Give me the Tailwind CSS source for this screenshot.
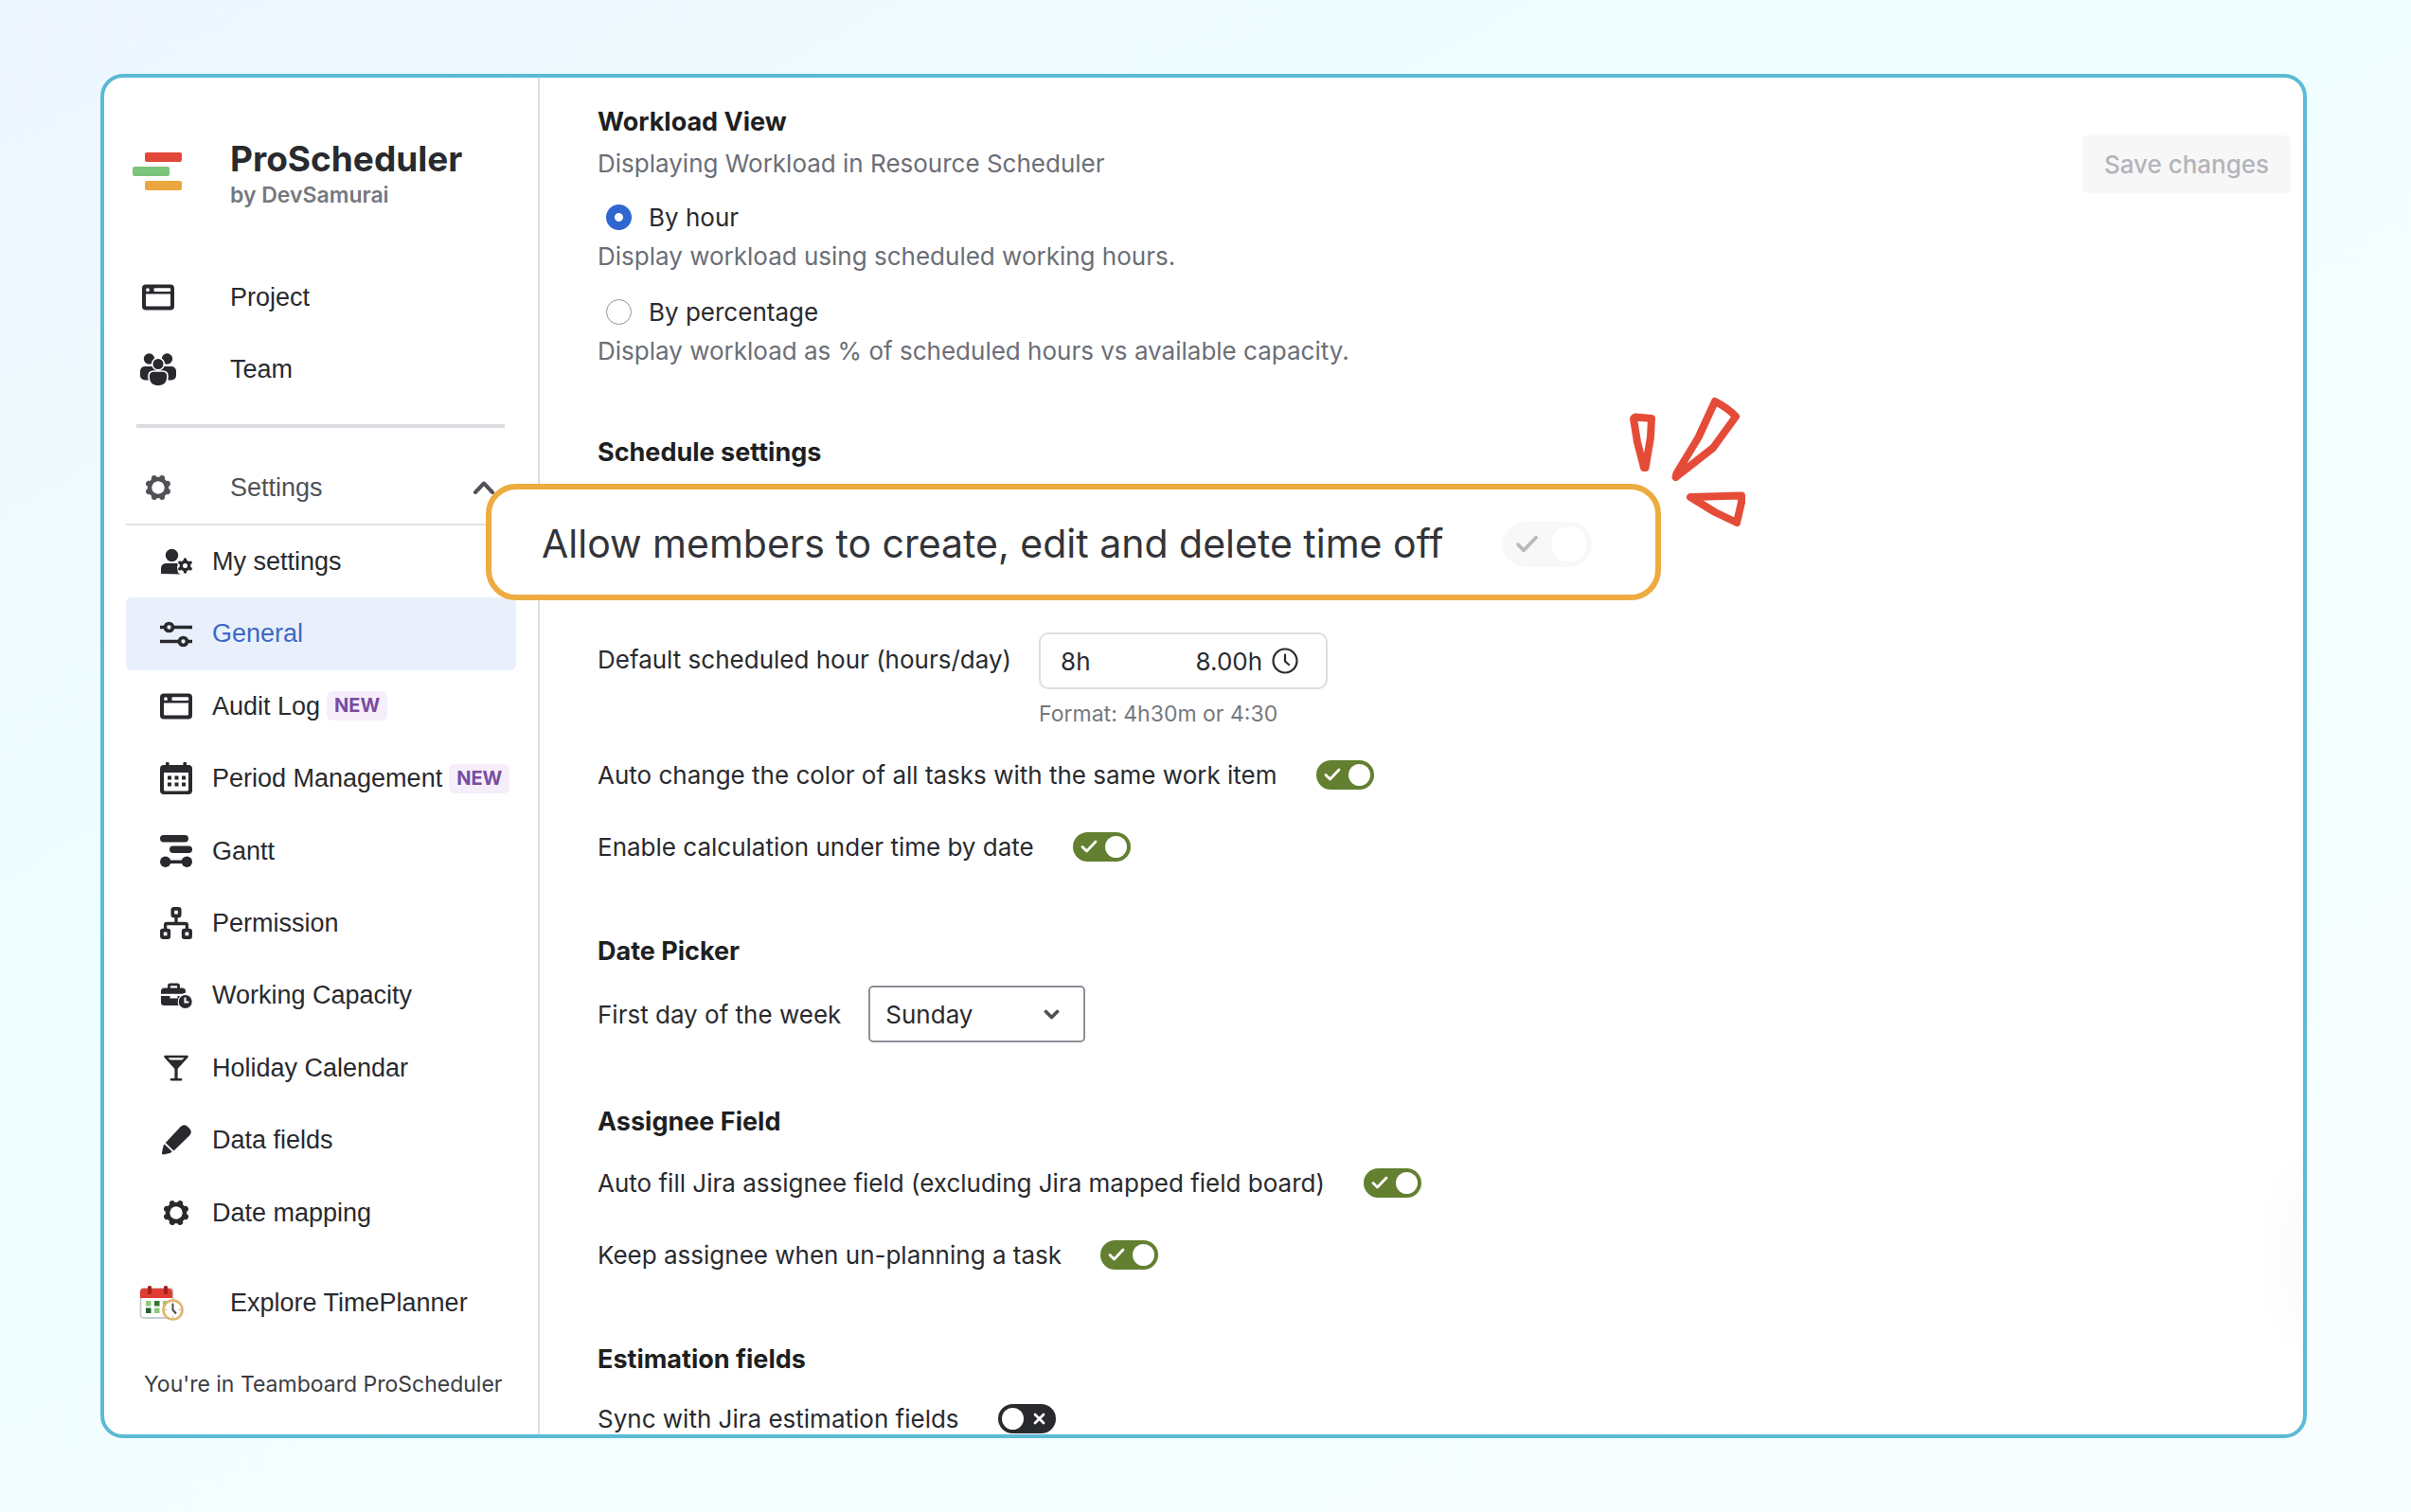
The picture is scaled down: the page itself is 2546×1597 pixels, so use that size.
<!DOCTYPE html>
<html lang="en">
<head>
  <meta charset="utf-8">
  <meta name="viewport" content="width=device-width, initial-scale=1">
  <title>ProScheduler - General settings</title>
  <script src="https://cdn.jsdelivr.net/npm/@tailwindcss/browser@4"></script>
</head>
<body class="h-screen overflow-hidden bg-linear-150 from-[#eef6ff] via-[#effeff] via-35% to-[#f8feff] py-[78px] pl-[106px] pr-[110px] font-['Inter',sans-serif] text-[26px] text-[#292a2e]">

  <!-- icons used more than once -->
  <svg class="hidden">
    <symbol id="window" viewBox="0 0 34 28">
      <path fill="currentColor" fill-rule="evenodd" d="M4 .5h26a4 4 0 0 1 4 4v19a4 4 0 0 1-4 4H4a4 4 0 0 1-4-4v-19a4 4 0 0 1 4-4zM4 10.500v12q0 1 1 1h24q1 0 1-1v-12zM13.500 4.300q-1 0-1 1v1.700q0 1 1 1h15.500q1.200 0 1.200-1V5.300q0-1-1.200-1zM6 4.300a1.900 1.900 0 1 0 0 3.800 1.900 1.900 0 0 0 0-3.800z" />
    </symbol>
    <symbol id="gear" viewBox="0 0 28 28">
      <circle cx="14" cy="14" r="9" fill="none" stroke="currentColor" stroke-width="4.500" />
      <g fill="none" stroke="currentColor" stroke-width="6" stroke-linecap="round" transform="rotate(22.500 14 14)">
        <path d="M14 3.200v1M14 23.800v1M3.200 14h1M23.800 14h1M6.400 6.400l.6.600M21 21l.6.600M21.600 6.400l-.6.600M7 21l-.6.600" />
      </g>
    </symbol>
    <symbol id="check" viewBox="0 0 18 14">
      <path d="M2 7.500l4.500 4.500L16 2" fill="none" stroke="currentColor" stroke-width="2.800" stroke-linecap="round" stroke-linejoin="round" />
    </symbol>
  </svg>

  <div class="relative h-full">
    <div class="relative flex h-full overflow-hidden rounded-[24px] border-4 border-[#5bbad5] bg-white">

      <!-- sidebar -->
      <aside class="w-[460px] shrink-0 border-r-2 border-[#dddee1] pt-[63px] font-['Liberation_Sans',Arial,sans-serif] text-[27px]">
        <div class="flex items-start pl-[30px] font-['Inter',sans-serif] font-semibold">
          <svg class="mt-[15px] h-[42px] w-[52px]" viewBox="0 0 52 42">
            <rect x="13" y="1" width="39" height="10" rx="2" fill="#e2483a" />
            <rect x="0" y="16" width="39" height="10" rx="2" fill="#7bc47b" />
            <rect x="13" y="31" width="39" height="10" rx="2" fill="#eba73f" />
          </svg>
          <div class="ml-[51px]">
            <h1 class="text-[37px] font-bold leading-[46px]">ProScheduler</h1>
            <p class="text-[23px] leading-[30px] text-[#75787d]">by DevSamurai</p>
          </div>
        </div>

        <nav class="mt-[55px] px-[23px]">
          <a href="#" class="flex h-[76px] items-center">
            <span class="flex w-[68px] justify-center"><svg class="h-[28px] w-[34px]"><use href="#window" /></svg></span>
            <span class="ml-[42px]">Project</span>
          </a>
          <a href="#" class="flex h-[76px] items-center">
            <span class="flex w-[68px] justify-center">
              <svg class="h-[36px] w-[40px]" viewBox="0 0 40 36" fill="currentColor">
                <circle cx="10.500" cy="7" r="5.700" />
                <circle cx="29.500" cy="7" r="5.700" />
                <rect x="1" y="15" width="18" height="14.500" rx="5" />
                <rect x="21" y="15" width="18" height="14.500" rx="5" />
                <g stroke="#fff" stroke-width="1.600">
                  <circle cx="20" cy="12.500" r="6.300" />
                  <path d="M10 25.500q0-5.500 5.500-5.500h9q5.500 0 5.500 5.500 0 10.500-10 10.500t-10-10.500z" />
                </g>
              </svg>
            </span>
            <span class="ml-[42px]">Team</span>
          </a>
          <hr class="ml-[11px] mr-[12px] mt-5 border-t-4 border-[#dcdde0]">
          <button type="button" class="mt-[25px] flex h-[78px] w-full items-center border-b-2 border-[#e0e1e4] text-[#505258]">
            <span class="flex w-[68px] justify-center"><svg class="h-[28px] w-[28px]"><use href="#gear" /></svg></span>
            <span class="ml-[42px]">Settings</span>
            <svg class="ml-auto mr-[22px] h-[16px] w-[24px]" viewBox="0 0 24 16" fill="none" stroke="currentColor" stroke-width="4" stroke-linecap="round" stroke-linejoin="round"><path d="M3 13l9-9.500 9 9.500" /></svg>
          </button>

          <ul class="grid h-[764px] auto-rows-fr">
            <li><a href="#" class="flex h-full items-center gap-[21px] pl-9">
              <svg class="h-[28px] w-[34px]" viewBox="0 0 34 28" fill="currentColor">
                <circle cx="12.500" cy="7.500" r="6.700" />
                <path d="M1 27V21.500q0-5.500 6-5.500h11.500q.5 2-.5 4l1 6q1.500.5 3 1.500z" />
                <circle cx="26.500" cy="18.500" r="4.200" fill="none" stroke="currentColor" stroke-width="3.400" />
                <path d="M26.500 12.800v-.8M26.500 24.200v.8M21.600 15.600l-.7-.4M31.400 21.400l.7.400M31.400 15.600l.7-.4M21.600 21.400l-.7.400" stroke="currentColor" stroke-width="3.400" stroke-linecap="round" />
              </svg>
              My settings
            </a></li>
            <li><a href="#" class="flex h-full items-center gap-[21px] rounded-md bg-[#e9f0fc] pl-9">
              <svg class="h-[28px] w-[34px]" viewBox="0 0 34 28" fill="none" stroke="currentColor" stroke-width="3.700">
                <path d="M0 6.500h5M14 6.500h20M0 21.500h20M29 21.500h5" />
                <circle cx="9.500" cy="6.500" r="4" />
                <circle cx="24.500" cy="21.500" r="4" />
              </svg>
              <span class="text-[#3d69c4]">General</span>
            </a></li>
            <li><a href="#" class="flex h-full items-center gap-[21px] pl-9">
              <svg class="h-[28px] w-[34px]"><use href="#window" /></svg>
              <span class="flex items-center gap-[7px]">Audit Log <span class="rounded-md bg-[#f6eefb] px-2 font-['Inter',sans-serif] text-[20px] font-bold leading-[31px] text-[#7a4c9f]">NEW</span></span>
            </a></li>
            <li><a href="#" class="flex h-full items-center gap-[21px] pl-9">
              <svg class="h-[34px] w-[34px]" viewBox="0 0 34 34">
                <path fill="currentColor" fill-rule="evenodd" d="M6 1.500a1.700 1.700 0 0 1 3.600 0V3h14.800V1.500a1.700 1.700 0 0 1 3.600 0V3h2a4 4 0 0 1 4 4v23a4 4 0 0 1-4 4H4a4 4 0 0 1-4-4V7a4 4 0 0 1 4-4h2zM4 11v18q0 1.500 1.500 1.500h23q1.500 0 1.500-1.500V11z" />
                <path d="M8 16.500h19M8 23.500h19" stroke="currentColor" stroke-width="4" stroke-dasharray="4 3.500" />
              </svg>
              <span class="flex items-center gap-[7px] whitespace-nowrap">Period Management <span class="rounded-md bg-[#f6eefb] px-2 font-['Inter',sans-serif] text-[20px] font-bold leading-[31px] text-[#7a4c9f]">NEW</span></span>
            </a></li>
            <li><a href="#" class="flex h-full items-center gap-[21px] pl-9">
              <svg class="h-[34px] w-[34px]" viewBox="0 0 34 34" fill="currentColor">
                <rect width="30" height="7.500" rx="3.700" />
                <rect x="10" y="11.500" width="24" height="7.500" rx="3.700" />
                <circle cx="5.700" cy="28.300" r="5.700" />
                <circle cx="28.300" cy="28.300" r="5.700" />
                <rect x="6" y="26.500" width="22" height="3.600" />
              </svg>
              Gantt
            </a></li>
            <li><a href="#" class="flex h-full items-center gap-[21px] pl-9">
              <svg class="h-[34px] w-[34px]" viewBox="0 0 34 34" fill="none" stroke="currentColor" stroke-width="3.700">
                <rect x="13.300" y="1.900" width="7.400" height="7.400" rx="1" />
                <rect x="1.900" y="24.700" width="7.400" height="7.400" rx="1" />
                <rect x="24.700" y="24.700" width="7.400" height="7.400" rx="1" />
                <path d="M17 9.500v8M5.600 24v-5q0-1.500 1.500-1.500h19.800q1.500 0 1.500 1.500v5" stroke-width="3.300" />
              </svg>
              Permission
            </a></li>
            <li><a href="#" class="flex h-full items-center gap-[21px] pl-9">
              <svg class="h-[28px] w-[34px]" viewBox="0 0 34 28" fill="currentColor">
                <path d="M9.500 6V3q0-1.200 1.200-1.200h7.600q1.200 0 1.200 1.200v3" fill="none" stroke="currentColor" stroke-width="2.800" />
                <path d="M1 12.500V9q0-3.500 3.500-3.500h19Q27 5.500 27 9v1.500l-3.500 1.300H1z" />
                <path d="M1 14h9.500v2.500h8V14H21q-2.500 3-2.300 6.500.1 1.800.8 3.500H4.500Q1 24 1 20.800z" />
                <circle cx="26.700" cy="20" r="7" />
                <path d="M26.500 15.500v5h3.800" fill="none" stroke="#fff" stroke-width="2" />
              </svg>
              Working Capacity
            </a></li>
            <li><a href="#" class="flex h-full items-center gap-[21px] pl-9">
              <svg class="h-[28px] w-[34px]" viewBox="0 0 34 28" fill="none" stroke="currentColor">
                <path d="M5.500 2h23L17 14.500z" stroke-width="2.600" stroke-linejoin="round" />
                <path d="M8.500 5.500h17L17 14.500z" fill="currentColor" stroke="none" />
                <path d="M17 13v12" stroke-width="3.200" />
                <path d="M12 26.300h10" stroke-width="2.600" stroke-linecap="round" />
              </svg>
              Holiday Calendar
            </a></li>
            <li><a href="#" class="flex h-full items-center gap-[21px] pl-9">
              <svg class="h-[34px] w-[34px]" viewBox="0 0 34 34" fill="currentColor">
                <path d="M5.800 20L21.500 3.200q4-3.700 7.700-.2l2 2q3.300 3.700-.2 7.500L14.500 28.500z" />
                <path d="M4.700 21.500l8 7.700-1.700 1.600-7 1.700q-2.300.2-2-2l1.600-7.400z" />
              </svg>
              Data fields
            </a></li>
            <li><a href="#" class="flex h-full items-center gap-[21px] pl-9">
              <span class="flex w-[34px] justify-center"><svg class="h-[28px] w-[28px]"><use href="#gear" /></svg></span>
              Date mapping
            </a></li>
          </ul>

          <a href="#" class="mt-[19px] flex h-[76px] items-center pl-[14px]">
            <svg class="h-[38px] w-[48px]" viewBox="0 0 48 38">
              <rect x="1.500" y="4" width="34" height="31" rx="3" fill="#fff" stroke="#c9ccd0" stroke-width="1.800" />
              <path d="M1 14V8q0-4 4-4h26q4 0 4 4v6z" fill="#e03c31" />
              <rect x="9" y="1" width="4" height="9" rx="1.500" fill="#a3201c" />
              <rect x="26" y="1" width="4" height="9" rx="1.500" fill="#a3201c" />
              <rect x="7" y="17" width="5.500" height="5.500" fill="#8bc97a" />
              <rect x="16" y="17" width="5.500" height="5.500" fill="#35762f" />
              <rect x="25" y="17" width="5.500" height="5.500" fill="#8bc97a" />
              <rect x="7" y="24.500" width="5.500" height="5.500" fill="#24632f" />
              <rect x="16" y="24.500" width="5.500" height="5.500" fill="#8bc97a" />
              <circle cx="35.500" cy="26.500" r="10" fill="#fff" stroke="#dfb56a" stroke-width="2.600" />
              <path d="M35.500 20v6.500l3.500 4" fill="none" stroke="#4a4d55" stroke-width="2" />
              <path d="M35.500 18.500v1.500M35.500 33v1.500M27.500 26.500h1.500M42 26.500h1.500" stroke="#9a9da3" stroke-width="1.200" />
            </svg>
            <span class="ml-[48px]">Explore TimePlanner</span>
          </a>
        </nav>
        <p class="mt-[26px] pl-[42px] font-['Inter',sans-serif] text-[23px] leading-[44px] text-[#3b3d42]">You're in Teamboard ProScheduler</p>
      </aside>

      <!-- general settings -->
      <main class="flex flex-1 items-start overflow-hidden">
        <form class="flex-1 whitespace-nowrap pl-[61px] pt-[25px]">
          <fieldset>
            <legend class="text-[27px] font-bold leading-[44px] text-[#1e1f21]">Workload View</legend>
            <p class="leading-[44px] text-[#6b6e76]">Displaying Workload in Resource Scheduler</p>
            <label class="mt-4 flex h-9 items-center gap-[18px] pl-[9px]">
              <input type="radio" name="workload" checked class="size-[27px] appearance-none rounded-full border border-[#8c8f97] bg-white checked:border-[9px] checked:border-[#2f66d0]">
              By hour
            </label>
            <p class="leading-[48px] text-[#6b6e76]">Display workload using scheduled working hours.</p>
            <label class="mt-4 flex h-9 items-center gap-[18px] pl-[9px]">
              <input type="radio" name="workload" class="size-[27px] appearance-none rounded-full border border-[#8c8f97] bg-white checked:border-[9px] checked:border-[#2f66d0]">
              By percentage
            </label>
            <p class="leading-[48px] text-[#6b6e76]">Display workload as % of scheduled hours vs available capacity.</p>
          </fieldset>

          <section class="mt-[61px]">
            <h2 class="text-[27px] font-bold leading-[44px] text-[#1e1f21]">Schedule settings</h2>
            <div class="mt-[168px] flex gap-[29px]">
              <label for="hours" class="leading-[58px]">Default scheduled hour (hours/day)</label>
              <div>
                <div class="flex h-[60px] w-[305px] items-center rounded-[10px] border-2 border-[#dddee1] pl-[21px] pr-[29px]">
                  <input id="hours" type="text" value="8h" class="min-w-0 flex-1 outline-none">
                  <span>8.00h</span>
                  <svg class="ml-[10px] h-[28px] w-[28px]" viewBox="0 0 28 28" fill="none" stroke="currentColor" stroke-width="2.200" stroke-linecap="round"><circle cx="14" cy="14" r="12.500" /><path d="M14 7.500v7l4 3.500" /></svg>
                </div>
                <p class="text-[23px] leading-[52px] text-[#75787d]">Format: 4h30m or 4:30</p>
              </div>
            </div>
            <label class="flex h-[76px] items-center gap-[41px]">
              Auto change the color of all tasks with the same work item
              <span class="relative flex">
                <input type="checkbox" role="switch" checked class="h-[31px] w-[61px] appearance-none rounded-full bg-[#637f30]">
                <svg class="absolute left-[8px] top-[8px] h-[14px] w-[18px] text-white"><use href="#check" /></svg>
                <span class="absolute right-[4px] top-[4px] size-[23px] rounded-full bg-white"></span>
              </span>
            </label>
            <label class="flex h-[76px] items-center gap-[41px]">
              Enable calculation under time by date
              <span class="relative flex">
                <input type="checkbox" role="switch" checked class="h-[31px] w-[61px] appearance-none rounded-full bg-[#637f30]">
                <svg class="absolute left-[8px] top-[8px] h-[14px] w-[18px] text-white"><use href="#check" /></svg>
                <span class="absolute right-[4px] top-[4px] size-[23px] rounded-full bg-white"></span>
              </span>
            </label>
          </section>

          <section class="mt-[51px]">
            <h2 class="text-[27px] font-bold leading-[44px] text-[#1e1f21]">Date Picker</h2>
            <div class="mt-[14px] flex items-center gap-[29px]">
              <label for="first-day">First day of the week</label>
              <div class="relative">
                <select id="first-day" class="h-[60px] w-[229px] appearance-none rounded-[5px] border-2 border-[#8c8f97] bg-white pl-4">
                  <option>Sunday</option>
                  <option>Monday</option>
                </select>
                <svg class="pointer-events-none absolute right-[27px] top-[25px] h-[12px] w-[17px] text-[#505258]" viewBox="0 0 17 12" fill="none" stroke="currentColor" stroke-width="3.800" stroke-linecap="round" stroke-linejoin="round"><path d="M2.500 2.500l6 6 6-6" /></svg>
              </div>
            </div>
          </section>

          <section class="mt-[62px]">
            <h2 class="text-[27px] font-bold leading-[44px] text-[#1e1f21]">Assignee Field</h2>
            <label class="mt-1 flex h-[76px] items-center gap-[41px]">
              Auto fill Jira assignee field (excluding Jira mapped field board)
              <span class="relative flex">
                <input type="checkbox" role="switch" checked class="h-[31px] w-[61px] appearance-none rounded-full bg-[#637f30]">
                <svg class="absolute left-[8px] top-[8px] h-[14px] w-[18px] text-white"><use href="#check" /></svg>
                <span class="absolute right-[4px] top-[4px] size-[23px] rounded-full bg-white"></span>
              </span>
            </label>
            <label class="flex h-[76px] items-center gap-[41px]">
              Keep assignee when un-planning a task
              <span class="relative flex">
                <input type="checkbox" role="switch" checked class="h-[31px] w-[61px] appearance-none rounded-full bg-[#637f30]">
                <svg class="absolute left-[8px] top-[8px] h-[14px] w-[18px] text-white"><use href="#check" /></svg>
                <span class="absolute right-[4px] top-[4px] size-[23px] rounded-full bg-white"></span>
              </span>
            </label>
          </section>

          <section class="mt-[51px]">
            <h2 class="text-[27px] font-bold leading-[44px] text-[#1e1f21]">Estimation fields</h2>
            <label class="mt-[2px] flex h-[76px] items-center gap-[41px]">
              Sync with Jira estimation fields
              <span class="relative flex">
                <input type="checkbox" role="switch" class="h-[31px] w-[61px] appearance-none rounded-full bg-[#292a2e]">
                <span class="absolute left-[4px] top-[4px] size-[23px] rounded-full bg-white"></span>
                <svg class="absolute right-[11px] top-[9px] size-[13px] text-white" viewBox="0 0 13 13" fill="none" stroke="currentColor" stroke-width="2.800" stroke-linecap="round"><path d="M2 2l9 9M11 2l-9 9" /></svg>
              </span>
            </label>
          </section>
        </form>
        <button type="button" disabled class="mr-[13px] mt-[61px] h-[61px] w-[220px] rounded-md bg-[#f7f7f8] font-medium text-[#b3b4b9]">Save changes</button>
      </main>

      <div class="absolute -right-10 bottom-[110px] h-[160px] w-10 rounded-full shadow-[0_0_60px_rgba(0,0,0,0.05)]"></div>
    </div>

    <!-- highlighted setting, laid over both columns -->
    <label class="absolute left-[407px] top-[433px] flex h-[123px] w-[1241px] items-center justify-between rounded-[32px] border-[6px] border-[#edab40] bg-white pl-[53px] pr-[67px] pt-1 text-[41px] text-[#333438]">
      Allow members to create, edit and delete time off
      <span class="relative flex">
        <input type="checkbox" role="switch" checked disabled class="h-[48px] w-[94px] appearance-none rounded-full bg-[#f8f8f9]">
        <svg class="absolute left-[12px] top-[14px] h-[19px] w-[27px] text-[#b9babd]"><use href="#check" /></svg>
        <span class="absolute right-[5px] top-[5px] size-[38px] rounded-full bg-white"></span>
      </span>
    </label>
    <svg class="absolute left-[1609px] top-[336px] h-[150px] w-[140px]" viewBox="0 0 140 150" fill="none" stroke="#e54c38" stroke-width="8" stroke-linejoin="round">
      <path d="M10 28l2-1.500 17 1.500-1 20-5.500 32h-1.500l-7-27z" />
      <path d="M96 10q14 7 22 16l-24 33-39.500 31 1-4 23-38z" />
      <path d="M70 111l54-1.500v7l-5 21.500-23-11z" />
    </svg>
  </div>
</body>
</html>
